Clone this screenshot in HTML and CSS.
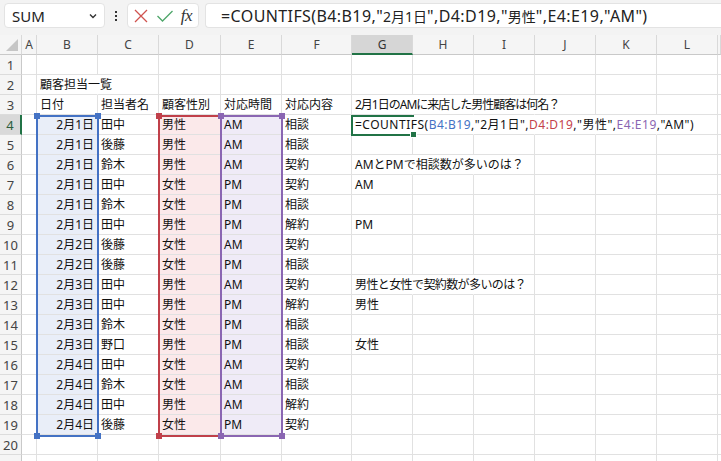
FILE: index.html
```html
<!DOCTYPE html>
<html lang="ja">
<head>
<meta charset="utf-8">
<title>Excel</title>
<link rel="stylesheet" href="styles.css">
</head>
<body>
<div class="toolbar">
  <div class="namebox"><span>SUM</span>
    <svg class="chev" width="10" height="8" viewBox="0 0 10 8"><path d="M2 2.5 L5 5.5 L8 2.5" fill="none" stroke="#333" stroke-width="1.4"/></svg>
  </div>
  <div class="dots"><i></i><i></i><i></i></div>
  <div class="btns">
    <svg width="16" height="16" viewBox="0 0 16 16"><path d="M2 2 L14 14 M14 2 L2 14" stroke="#d0534f" stroke-width="1.3" fill="none"/></svg>
    <svg width="18" height="16" viewBox="0 0 18 16"><path d="M1.5 8 L6.5 13 L16.5 3" stroke="#4ea66a" stroke-width="1.3" fill="none"/></svg>
    <span class="fx">fx</span>
  </div>
  <div class="finput">=COUNTIFS(B4:B19,"<span class="j">2月1日</span>",D4:D19,"<span class="j">男性</span>",E4:E19,"AM")</div>
</div>

<div class="sheet">
  <div class="row head">
    <div class="corner"><span class="tri"></span></div>
    <div class="h">A</div><div class="h">B</div><div class="h">C</div><div class="h">D</div><div class="h">E</div><div class="h">F</div><div class="h sel">G</div><div class="h">H</div><div class="h">I</div><div class="h">J</div><div class="h">K</div><div class="h">L</div><div class="h"></div>
  </div>
  <div class="row"><div class="rh">1</div><div class="c"></div><div class="c"></div><div class="c"></div><div class="c"></div><div class="c"></div><div class="c"></div><div class="c"></div><div class="c"></div><div class="c"></div><div class="c"></div><div class="c"></div><div class="c"></div><div class="c"></div></div>
  <div class="row"><div class="rh">2</div><div class="c"></div><div class="c nb">顧客担当一覧</div><div class="c"></div><div class="c"></div><div class="c"></div><div class="c"></div><div class="c"></div><div class="c"></div><div class="c"></div><div class="c"></div><div class="c"></div><div class="c"></div><div class="c"></div></div>
  <div class="row"><div class="rh">3</div><div class="c"></div><div class="c">日付</div><div class="c">担当者名</div><div class="c">顧客性別</div><div class="c">対応時間</div><div class="c">対応内容</div><div class="c nb q1">2月1日のAMに来店した男性顧客は何名？</div><div class="c nb"></div><div class="c nb"></div><div class="c"></div><div class="c"></div><div class="c"></div><div class="c"></div></div>
  <div class="row"><div class="rh rsel">4</div><div class="c"></div><div class="c r fb">2月1日</div><div class="c">田中</div><div class="c fr">男性</div><div class="c fp">AM</div><div class="c">相談</div><div class="c nb fm">=COUNTIFS(<span class="kb">B4:B19</span>,"2月1日",<span class="kr">D4:D19</span>,"男性",<span class="kp">E4:E19</span>,"AM")</div><div class="c nb"></div><div class="c nb"></div><div class="c nb"></div><div class="c nb"></div><div class="c"></div><div class="c"></div></div>
  <div class="row"><div class="rh">5</div><div class="c"></div><div class="c r fb">2月1日</div><div class="c">後藤</div><div class="c fr">男性</div><div class="c fp">AM</div><div class="c">相談</div><div class="c"></div><div class="c"></div><div class="c"></div><div class="c"></div><div class="c"></div><div class="c"></div><div class="c"></div></div>
  <div class="row"><div class="rh">6</div><div class="c"></div><div class="c r fb">2月1日</div><div class="c">鈴木</div><div class="c fr">男性</div><div class="c fp">AM</div><div class="c">契約</div><div class="c nb">AMとPMで相談数が多いのは？</div><div class="c nb"></div><div class="c"></div><div class="c"></div><div class="c"></div><div class="c"></div><div class="c"></div></div>
  <div class="row"><div class="rh">7</div><div class="c"></div><div class="c r fb">2月1日</div><div class="c">田中</div><div class="c fr">女性</div><div class="c fp">PM</div><div class="c">契約</div><div class="c">AM</div><div class="c"></div><div class="c"></div><div class="c"></div><div class="c"></div><div class="c"></div><div class="c"></div></div>
  <div class="row"><div class="rh">8</div><div class="c"></div><div class="c r fb">2月1日</div><div class="c">鈴木</div><div class="c fr">女性</div><div class="c fp">PM</div><div class="c">相談</div><div class="c"></div><div class="c"></div><div class="c"></div><div class="c"></div><div class="c"></div><div class="c"></div><div class="c"></div></div>
  <div class="row"><div class="rh">9</div><div class="c"></div><div class="c r fb">2月1日</div><div class="c">田中</div><div class="c fr">男性</div><div class="c fp">PM</div><div class="c">解約</div><div class="c">PM</div><div class="c"></div><div class="c"></div><div class="c"></div><div class="c"></div><div class="c"></div><div class="c"></div></div>
  <div class="row"><div class="rh">10</div><div class="c"></div><div class="c r fb">2月2日</div><div class="c">後藤</div><div class="c fr">女性</div><div class="c fp">AM</div><div class="c">契約</div><div class="c"></div><div class="c"></div><div class="c"></div><div class="c"></div><div class="c"></div><div class="c"></div><div class="c"></div></div>
  <div class="row"><div class="rh">11</div><div class="c"></div><div class="c r fb">2月2日</div><div class="c">後藤</div><div class="c fr">女性</div><div class="c fp">PM</div><div class="c">相談</div><div class="c"></div><div class="c"></div><div class="c"></div><div class="c"></div><div class="c"></div><div class="c"></div><div class="c"></div></div>
  <div class="row"><div class="rh">12</div><div class="c"></div><div class="c r fb">2月3日</div><div class="c">田中</div><div class="c fr">男性</div><div class="c fp">AM</div><div class="c">契約</div><div class="c nb q3">男性と女性で契約数が多いのは？</div><div class="c nb"></div><div class="c"></div><div class="c"></div><div class="c"></div><div class="c"></div><div class="c"></div></div>
  <div class="row"><div class="rh">13</div><div class="c"></div><div class="c r fb">2月3日</div><div class="c">田中</div><div class="c fr">男性</div><div class="c fp">PM</div><div class="c">解約</div><div class="c">男性</div><div class="c"></div><div class="c"></div><div class="c"></div><div class="c"></div><div class="c"></div><div class="c"></div></div>
  <div class="row"><div class="rh">14</div><div class="c"></div><div class="c r fb">2月3日</div><div class="c">鈴木</div><div class="c fr">女性</div><div class="c fp">PM</div><div class="c">相談</div><div class="c"></div><div class="c"></div><div class="c"></div><div class="c"></div><div class="c"></div><div class="c"></div><div class="c"></div></div>
  <div class="row"><div class="rh">15</div><div class="c"></div><div class="c r fb">2月3日</div><div class="c">野口</div><div class="c fr">男性</div><div class="c fp">PM</div><div class="c">相談</div><div class="c">女性</div><div class="c"></div><div class="c"></div><div class="c"></div><div class="c"></div><div class="c"></div><div class="c"></div></div>
  <div class="row"><div class="rh">16</div><div class="c"></div><div class="c r fb">2月4日</div><div class="c">田中</div><div class="c fr">女性</div><div class="c fp">AM</div><div class="c">契約</div><div class="c"></div><div class="c"></div><div class="c"></div><div class="c"></div><div class="c"></div><div class="c"></div><div class="c"></div></div>
  <div class="row"><div class="rh">17</div><div class="c"></div><div class="c r fb">2月4日</div><div class="c">鈴木</div><div class="c fr">女性</div><div class="c fp">AM</div><div class="c">相談</div><div class="c"></div><div class="c"></div><div class="c"></div><div class="c"></div><div class="c"></div><div class="c"></div><div class="c"></div></div>
  <div class="row"><div class="rh">18</div><div class="c"></div><div class="c r fb">2月4日</div><div class="c">田中</div><div class="c fr">男性</div><div class="c fp">AM</div><div class="c">解約</div><div class="c"></div><div class="c"></div><div class="c"></div><div class="c"></div><div class="c"></div><div class="c"></div><div class="c"></div></div>
  <div class="row"><div class="rh">19</div><div class="c"></div><div class="c r fb">2月4日</div><div class="c">後藤</div><div class="c fr">女性</div><div class="c fp">PM</div><div class="c">契約</div><div class="c"></div><div class="c"></div><div class="c"></div><div class="c"></div><div class="c"></div><div class="c"></div><div class="c"></div></div>
  <div class="row"><div class="rh">20</div><div class="c"></div><div class="c"></div><div class="c"></div><div class="c"></div><div class="c"></div><div class="c"></div><div class="c"></div><div class="c"></div><div class="c"></div><div class="c"></div><div class="c"></div><div class="c"></div><div class="c"></div></div>
  <div class="row"><div class="rh"></div><div class="c"></div><div class="c"></div><div class="c"></div><div class="c"></div><div class="c"></div><div class="c"></div><div class="c"></div><div class="c"></div><div class="c"></div><div class="c"></div><div class="c"></div><div class="c"></div><div class="c"></div></div>

  <div class="range rb"><i class="q tl"></i><i class="q tr"></i><i class="q bl"></i><i class="q br"></i></div>
  <div class="range rr"><i class="q tl"></i><i class="q tr"></i><i class="q bl"></i><i class="q br"></i></div>
  <div class="range rp"><i class="q tl"></i><i class="q tr"></i><i class="q bl"></i><i class="q br"></i></div>
  <div class="active"><i class="handle"></i></div>
</div>
</body>
</html>
```
FILE: styles.css
```css
html, body {
  margin: 0;
  padding: 0;
  background: #ffffff;
  overflow: hidden;
}
body {
  width: 721px;
  height: 461px;
  font-family: "Noto Sans", "Noto Sans CJK JP", sans-serif;
  color: #222;
}
.toolbar {
  height: 35px;
  background: #f3f3f3;
  display: flex;
  align-items: center;
  box-sizing: border-box;
  padding-bottom: 4px;
}
.namebox {
  margin-left: 4px;
  width: 101px;
  height: 25px;
  box-sizing: border-box;
  background: #fff;
  border: 1px solid #e3e3e3;
  border-radius: 4px;
  display: flex;
  align-items: center;
  justify-content: space-between;
  padding: 0 6px 0 7px;
  font-family: "Noto Sans", sans-serif;
  font-size: 15px;
  color: #222;
}
.chev { margin-top: 1px; }
.dots {
  width: 22px;
  display: flex;
  flex-direction: column;
  align-items: center;
  gap: 2px;
}
.dots i {
  width: 2px;
  height: 2px;
  background: #333;
  display: block;
}
.btns {
  width: 72px;
  height: 25px;
  box-sizing: border-box;
  background: #fff;
  border: 1px solid #e3e3e3;
  border-radius: 4px;
  display: flex;
  align-items: center;
  justify-content: space-between;
  padding: 0 6px 0 5px;
}
.fx {
  font-family: "Liberation Serif", serif;
  font-style: italic;
  font-size: 17px;
  color: #333;
  letter-spacing: -0.5px;
}
.finput {
  margin-left: 6px;
  flex: 1;
  height: 25px;
  box-sizing: border-box;
  background: #fff;
  border: 1px solid #e3e3e3;
  border-right: none;
  border-radius: 4px 0 0 4px;
  display: flex;
  align-items: center;
  padding-left: 15px;
  font-family: "Noto Sans", "Noto Sans CJK JP", sans-serif;
  font-size: 16px;
  letter-spacing: 0.4px;
  white-space: nowrap;
  color: #222;
}
.finput .j {
  font-size: 14px;
  letter-spacing: 0;
}

.sheet {
  position: relative;
}
.row {
  display: grid;
  grid-template-columns: 22px 15px 61px 61px 62px 61px 70px 61px 61px 61px 61px 61px 61px 1fr;
  height: 20px;
}
.row > div {
  box-sizing: border-box;
  height: 20px;
  border-right: 1px solid #e1e1e1;
  border-bottom: 1px solid #e1e1e1;
  white-space: nowrap;
  overflow: visible;
  font-size: 12px;
  line-height: 20px;
}
.head > div {
  background: #f5f5f5;
  border-right: 1px solid #d9d9d9;
  border-bottom: 1px solid #c9c9c9;
  text-align: center;
  font-family: "Noto Sans", sans-serif;
  font-size: 12px;
  color: #444;
  line-height: 19px;
}
.head .sel {
  background: #d6d6d6;
  border-bottom: 2px solid #217346;
  color: #333;
}
.corner {
  position: relative;
}
.tri {
  position: absolute;
  right: 3px;
  bottom: 3px;
  width: 0;
  height: 0;
  border-left: 12px solid transparent;
  border-bottom: 12px solid #c6c6c6;
}
.row > .rh {
  background: #f5f5f5;
  border-right: 1px solid #c9c9c9;
  border-bottom: 1px solid #dcdcdc;
  text-align: center;
  font-family: "Noto Sans", sans-serif;
  font-size: 13px;
  color: #444;
  line-height: 20px;
}
.row > .rsel {
  background: #d9d9d9;
  border-right: 2px solid #217346;
  color: #2d5e3e;
}
.row > .c {
  padding: 0 3px;
  color: #111;
}
.row > .r { text-align: right; padding-right: 3px; }
.row > .nb { border-right-color: transparent; }
.row > .fb { background: #e9eef8; }
.row > .fr { background: #fbe9ea; }
.row > .fp { background: #efebf7; }
.row > .fm { letter-spacing: 0.5px; }
.row > .q1 { letter-spacing: -1px; }
.row > .q3 { letter-spacing: -0.6px; }
.kb { color: #4472c4; }
.kr { color: #c4414b; }
.kp { color: #8a66b2; }

.range {
  position: absolute;
  top: 80px;
  height: 322px;
  box-sizing: border-box;
  border: 2px solid;
}
.rb { left: 36px; width: 63px; border-color: #4472c4; }
.rr { left: 158px; width: 64px; border-color: #c0404a; }
.rp { left: 220px; width: 63px; border-color: #8a66b2; }
.q {
  position: absolute;
  width: 6px;
  height: 6px;
  display: block;
}
.rb .q { background: #4472c4; }
.rr .q { background: #c0404a; }
.rp .q { background: #8a66b2; }
.tl { left: -4px; top: -4px; }
.tr { right: -4px; top: -4px; }
.bl { left: -4px; bottom: -4px; }
.br { right: -4px; bottom: -4px; }

.active {
  position: absolute;
  left: 351px;
  top: 80px;
  width: 63px;
  height: 21px;
  box-sizing: border-box;
  border: 2px solid #217346;
  border-right: none;
}
.handle {
  position: absolute;
  right: -3px;
  bottom: -4px;
  width: 5px;
  height: 5px;
  background: #217346;
  border: 1px solid #fff;
  display: block;
}
```
